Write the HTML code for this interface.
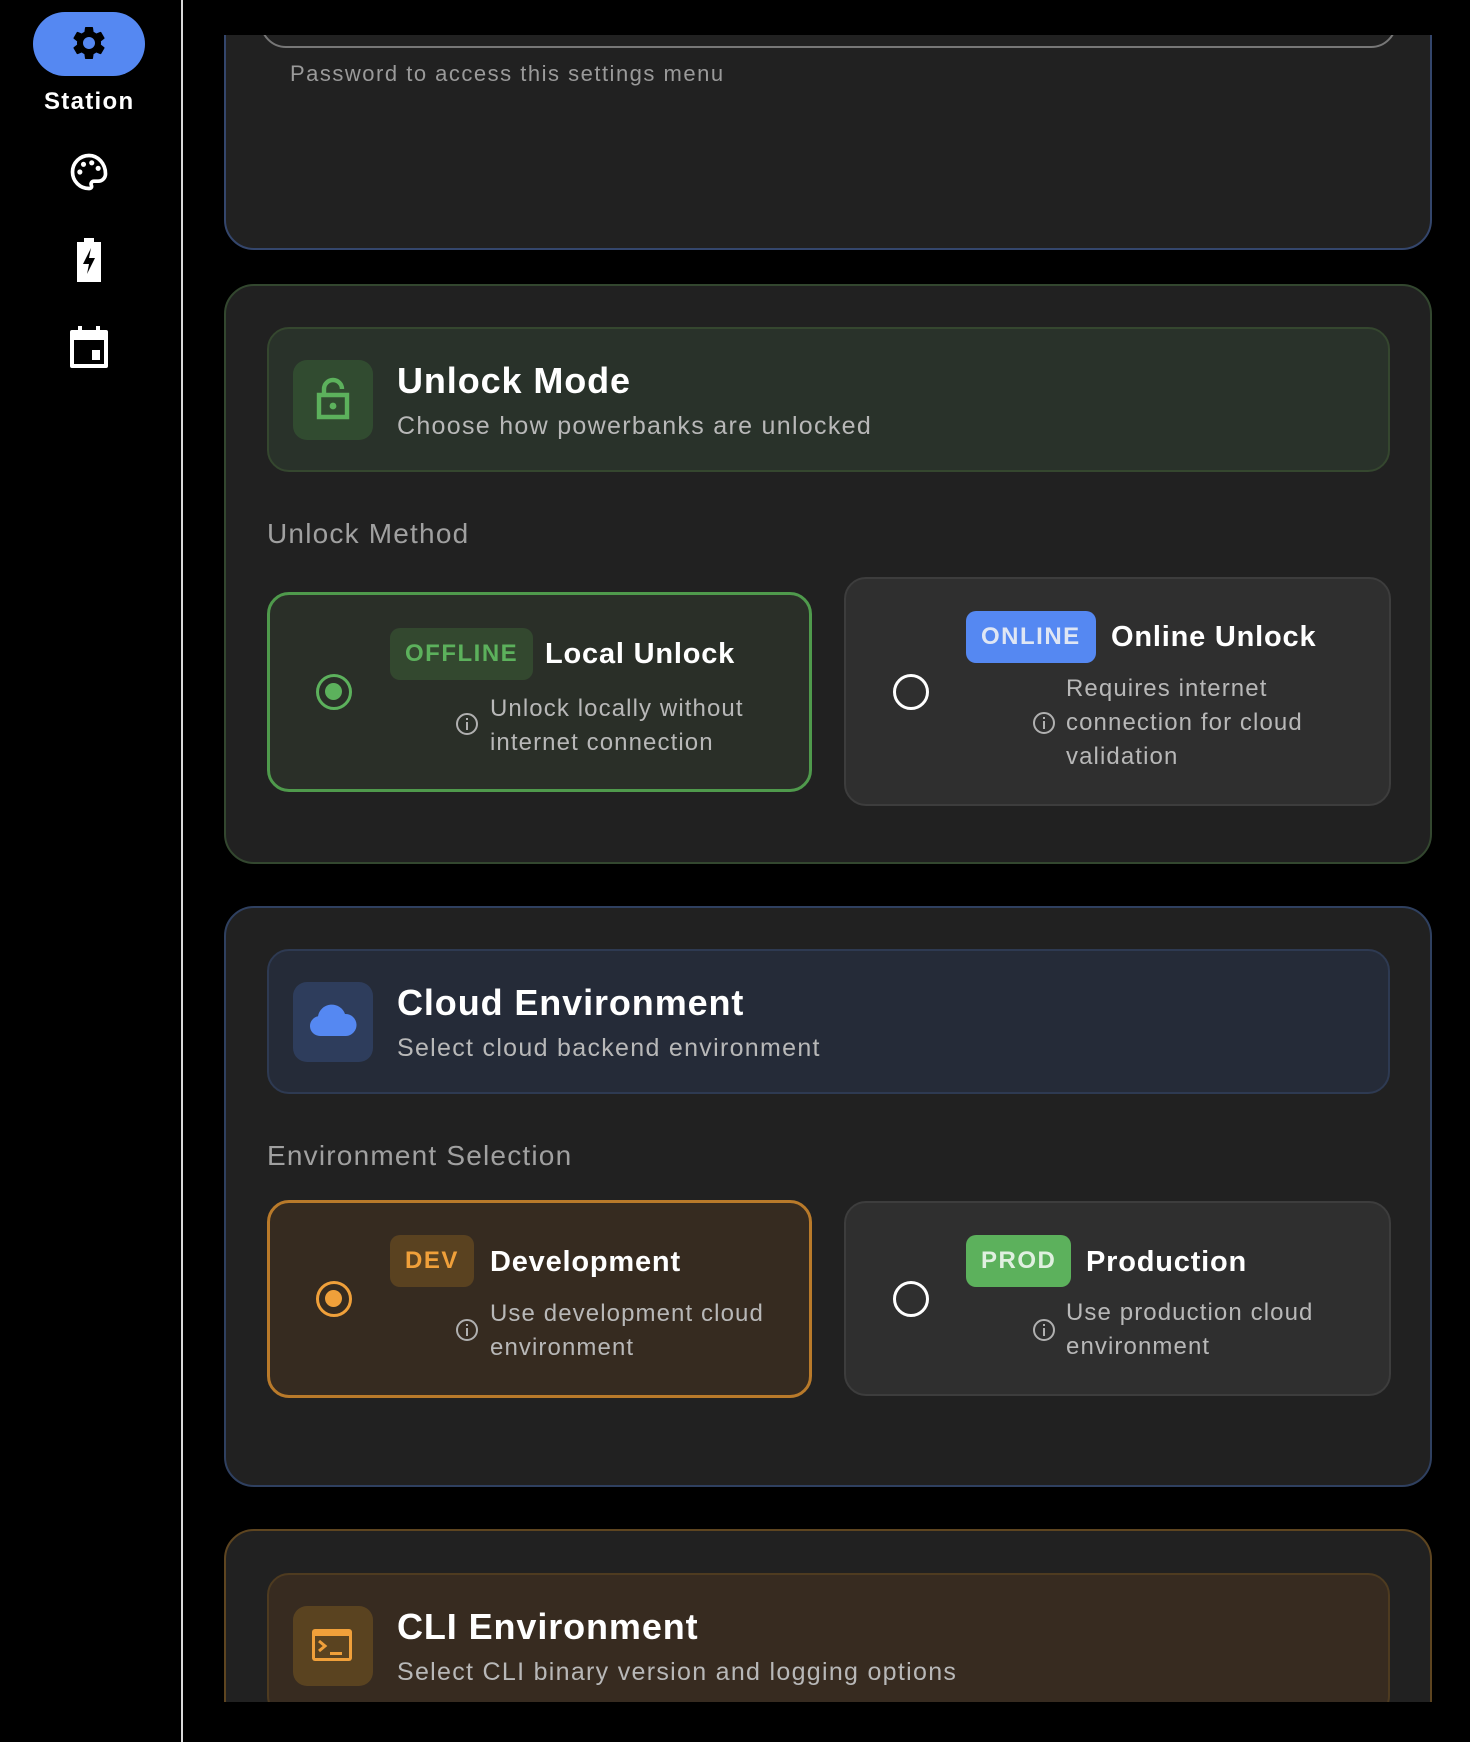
<!DOCTYPE html>
<html><head><meta charset="utf-8"><style>
*{margin:0;padding:0;box-sizing:border-box}
html,body{width:1470px;height:1742px;overflow:hidden}
body{background:#000;position:relative;font-family:"Liberation Sans",sans-serif;color:#fff}
.a{position:absolute}
.t{position:absolute;white-space:nowrap;line-height:1}
.card{position:absolute;left:224px;width:1208px;background:#212121;border:2px solid;border-radius:30px}
.hdr{position:absolute;left:41px;width:1123px;height:145px;border:2px solid;border-radius:22px}
.ib{position:absolute;left:24px;top:31px;width:80px;height:80px;border-radius:14px}
.h1{position:absolute;left:128px;top:34px;font-size:36px;font-weight:bold;letter-spacing:.9px;line-height:1}
.h2{position:absolute;left:128px;top:85px;font-size:25px;color:#b8b8b8;letter-spacing:1.3px;line-height:1}
.lbl{position:absolute;left:41px;font-size:28px;color:#a0a0a0;letter-spacing:1.2px;line-height:1}
.opt{position:absolute;border:3px solid;border-radius:22px}
.radio{position:absolute;width:36px;height:36px;border-radius:50%;border:3.5px solid}
.badge{position:absolute;height:52px;border-radius:10px;font-size:24px;font-weight:bold;letter-spacing:1.5px;line-height:52px;padding:0 15px}
.ot{position:absolute;font-size:29px;font-weight:bold;letter-spacing:.8px;line-height:1;white-space:nowrap}
.desc{position:absolute;font-size:24px;color:#b8b8b8;letter-spacing:1.1px;line-height:34px;white-space:nowrap}
.info{position:absolute;width:22px;height:22px;border:2px solid #b0b0b0;border-radius:50%}
.info:before{content:"";position:absolute;left:8px;top:3px;width:2px;height:2px;background:#b0b0b0}
.info:after{content:"";position:absolute;left:8px;top:7px;width:2px;height:8px;background:#b0b0b0}
</style></head><body>
<div class="a" style="left:181px;top:0;width:2px;height:1742px;background:#d8d8d8"></div>
<div class="a" style="left:33px;top:12px;width:112px;height:64px;border-radius:32px;background:#5588f2"></div>
<svg class="a" style="left:69px;top:23px" width="40" height="40" viewBox="0 0 24 24"><path fill="#000" d="M19.14 12.94c.04-.3.06-.61.06-.94 0-.32-.02-.64-.07-.94l2.030-1.58a.49.49 0 0 0 .12-.61l-1.92-3.32a.488.488 0 0 0-.59-.22l-2.39.96c-.5-.38-1.03-.7-1.62-.94l-.36-2.54a.484.484 0 0 0-.48-.41h-3.84c-.24 0-.43.17-.47.41l-.36 2.54c-.59.24-1.130.57-1.62.94l-2.39-.96c-.22-.08-.47 0-.59.22L2.74 8.87c-.12.21-.08.47.12.61l2.03 1.58c-.05.3-.09.63-.09.94s.02.64.07.94l-2.03 1.58a.49.49 0 0 0-.12.61l1.92 3.32c.12.22.37.29.59.22l2.39-.96c.5.38 1.03.7 1.62.94l.36 2.54c.05.24.24.41.48.41h3.84c.24 0 .44-.17.47-.41l.36-2.54c.59-.24 1.13-.56 1.62-.94l2.39.96c.22.08.47 0 .59-.22l1.92-3.32c.12-.22.07-.47-.12-.61l-2.01-1.58zM12 15.6c-1.98 0-3.6-1.62-3.6-3.6s1.62-3.6 3.6-3.6 3.6 1.62 3.6 3.6-1.62 3.6-3.6 3.6z"/></svg>
<div class="t" style="left:44px;top:90px;font-size:24px;font-weight:bold;letter-spacing:1.3px">Station</div>
<svg class="a" style="left:67px;top:150px" width="44" height="44" viewBox="0 0 24 24"><path fill="none" stroke="#fff" stroke-width="2" d="M12 3a9 9 0 0 0 0 18c1.2 0 1.7-.8 1.3-1.7-.5-1 .1-2.3 1.4-2.3H17a4 4 0 0 0 4-4c0-5.5-4-10-9-10z"/><circle cx="7" cy="12" r="1.4" fill="#fff"/><circle cx="9" cy="7.8" r="1.4" fill="#fff"/><circle cx="13.5" cy="7" r="1.4" fill="#fff"/><circle cx="17" cy="10" r="1.4" fill="#fff"/></svg>
<svg class="a" style="left:77px;top:238px" width="24" height="44" viewBox="0 0 12 22"><path fill="#fff" d="M3.5 0h5v2H12v20H0V2h3.5zM7 5L3 13h3l-1 5 4-8H6z"/></svg>
<svg class="a" style="left:70px;top:326px" width="38" height="42" viewBox="0 0 19 21"><path fill="#fff" d="M4 0h2v2h7V0h2v2h3a1 1 0 0 1 1 1v17a1 1 0 0 1-1 1H1a1 1 0 0 1-1-1V3a1 1 0 0 1 1-1h3zM2 7v12h15V7zm9 5h4v5h-4z"/></svg>

<div class="a" style="left:182px;top:35px;width:1260px;height:1667px;overflow:hidden">
 <div style="position:absolute;left:-182px;top:-35px;width:1470px;height:1742px;overflow:hidden">
  <div class="card" style="top:-100px;height:350px;border-color:#34466c">
   <div class="a" style="left:34px;top:0;width:1137px;height:146px;border:2px solid #777;border-radius:26px"></div>
   <div class="t" style="left:64px;top:161px;font-size:22px;color:#9a9a9a;letter-spacing:1.5px">Password to access this settings menu</div>
  </div>
  <div class="card" style="top:284px;height:580px;border-color:#33472f">
   <div class="hdr" style="top:41px;background:#29322a;border-color:#35472f">
    <div class="ib" style="background:#314b30"><svg style="position:absolute;left:22px;top:17px" width="36" height="44" viewBox="0 0 18 22"><path fill="none" stroke="#5cb15c" stroke-width="2.2" d="M4.5 9V6a4.5 4.5 0 0 1 9 0M2 9h14v11H2z"/><circle cx="9" cy="14.5" r="1.7" fill="#5cb15c"/></svg></div>
    <div class="h1">Unlock Mode</div><div class="h2">Choose how powerbanks are unlocked</div>
   </div>
   <div class="lbl" style="top:234px">Unlock Method</div>
   <div class="opt" style="left:41px;top:306px;width:545px;height:200px;background:#2a2f28;border-color:#4f9a4c">
    <div class="radio" style="left:46px;top:79px;border-color:#5cb15c"><div style="position:absolute;left:6px;top:6px;width:17px;height:17px;border-radius:50%;background:#5cb15c"></div></div>
    <div class="badge" style="left:120px;top:33px;background:#33482f;color:#5cb15c">OFFLINE</div>
    <div class="ot" style="left:275px;top:45px">Local Unlock</div>
    <div class="info" style="left:186px;top:118px"></div>
    <div class="desc" style="left:220px;top:97px">Unlock locally without<br>internet connection</div>
   </div>
   <div class="opt" style="left:618px;top:291px;width:547px;height:229px;background:#2f2f2f;border-color:#3d3d3d;border-width:2px">
    <div class="radio" style="left:47px;top:95px;border-color:#fff"></div>
    <div class="badge" style="left:120px;top:32px;background:#5588f2;color:#dfe6f4">ONLINE</div>
    <div class="ot" style="left:265px;top:44px">Online Unlock</div>
    <div class="info" style="left:187px;top:133px"></div>
    <div class="desc" style="left:220px;top:93px">Requires internet<br>connection for cloud<br>validation</div>
   </div>
  </div>
  <div class="card" style="top:906px;height:581px;border-color:#2f4060">
   <div class="hdr" style="top:41px;background:#252b38;border-color:#2e3a52">
    <div class="ib" style="background:#2e3d5c"><svg style="position:absolute;left:15px;top:20px" width="50" height="36" viewBox="0 0 50 36"><path fill="#5588f2" d="M12 34a10 10 0 0 1-2-19.8A14 14 0 0 1 37 12a11 11 0 0 1 1 22z"/></svg></div>
    <div class="h1">Cloud Environment</div><div class="h2">Select cloud backend environment</div>
   </div>
   <div class="lbl" style="top:234px">Environment Selection</div>
   <div class="opt" style="left:41px;top:292px;width:545px;height:198px;background:#362b20;border-color:#b97a2a">
    <div class="radio" style="left:46px;top:78px;border-color:#f0a03a"><div style="position:absolute;left:6px;top:6px;width:17px;height:17px;border-radius:50%;background:#f0a03a"></div></div>
    <div class="badge" style="left:120px;top:32px;background:#5a4220;color:#f0a03a">DEV</div>
    <div class="ot" style="left:220px;top:45px">Development</div>
    <div class="info" style="left:186px;top:116px"></div>
    <div class="desc" style="left:220px;top:94px">Use development cloud<br>environment</div>
   </div>
   <div class="opt" style="left:618px;top:293px;width:547px;height:195px;background:#2f2f2f;border-color:#3d3d3d;border-width:2px">
    <div class="radio" style="left:47px;top:78px;border-color:#fff"></div>
    <div class="badge" style="left:120px;top:32px;background:#5cb15c;color:#e0f0e0">PROD</div>
    <div class="ot" style="left:240px;top:45px">Production</div>
    <div class="info" style="left:187px;top:116px"></div>
    <div class="desc" style="left:220px;top:93px">Use production cloud<br>environment</div>
   </div>
  </div>
  <div class="card" style="top:1529px;height:300px;border-color:#5e4520">
   <div class="hdr" style="top:42px;background:#372b20;border-color:#4e3b20">
    <div class="ib" style="background:#5a4320"><svg style="position:absolute;left:18px;top:22px" width="42" height="34" viewBox="0 0 42 34"><rect x="1" y="1" width="40" height="32" rx="3" fill="#f0a03a"/><rect x="4" y="8" width="34" height="22" fill="#5a4320"/><path d="M8 13l6 5-6 5" stroke="#f0a03a" stroke-width="3" fill="none"/><rect x="19" y="24" width="12" height="3" fill="#f0a03a"/></svg></div>
    <div class="h1">CLI Environment</div><div class="h2">Select CLI binary version and logging options</div>
   </div>
  </div>
 </div>
</div>
</body></html>
